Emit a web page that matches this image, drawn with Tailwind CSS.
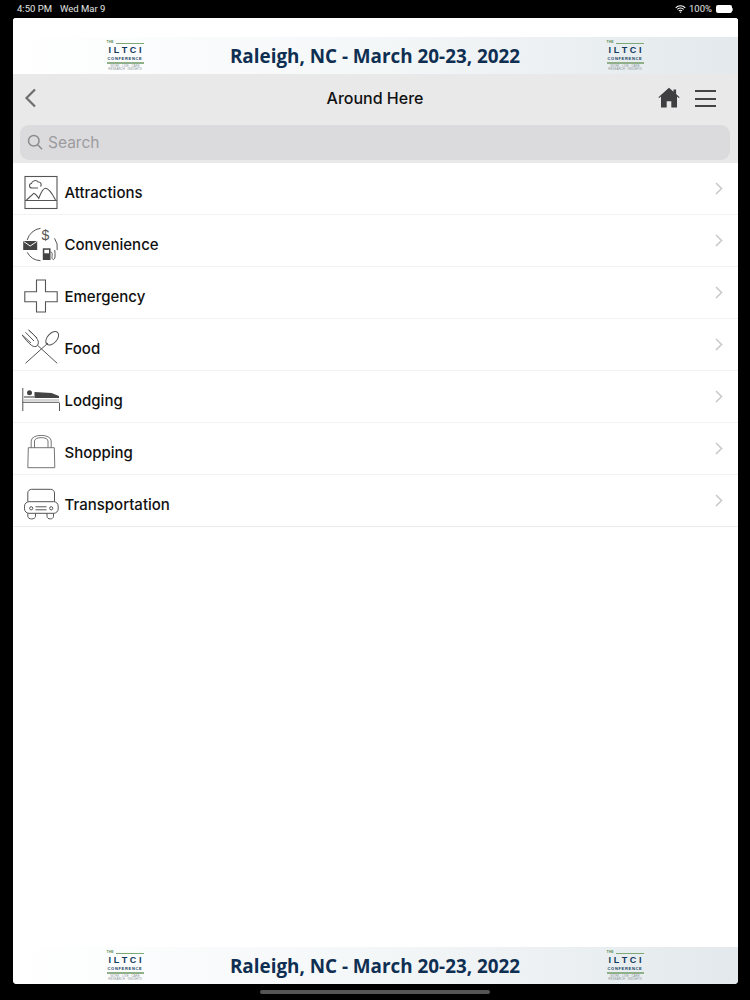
<!DOCTYPE html>
<html lang="en">
<head>
    <meta charset="UTF-8">
    <meta name="viewport" content="width=device-width, initial-scale=1.0">
    <title>Around Here</title>
    <script src="https://cdn.jsdelivr.net/npm/@tailwindcss/browser@4"></script>
</head>
<body class="bg-black w-[750px] h-[1000px] overflow-hidden font-['Inter','Liberation_Sans',sans-serif]">
    <!-- status bar -->
    <div class="h-[18px] flex items-center justify-between pl-[17px] pr-[17px] text-white/90 text-[9.5px] font-['Roboto',sans-serif]">
        <div class="flex gap-[8px]"><span>4:50 PM</span><span>Wed Mar 9</span></div>
        <div class="flex items-center gap-[3px]">
            <svg width="11" height="8" viewBox="0 0 11 8" fill="none" stroke="#fff" stroke-width="1.1"><path d="M.7 2.8a6.8 6.8 0 0 1 9.6 0M2.3 4.4a4.5 4.5 0 0 1 6.4 0M3.9 6a2.2 2.2 0 0 1 3.2 0"/><path d="M5.5 7.9 4.6 6.9a1.3 1.3 0 0 1 1.8 0z" fill="#fff" stroke="none"/></svg>
            <span>100%</span>
            <div class="flex items-center ml-[1px]">
                <div class="w-[16px] h-[8px] rounded-[2px] bg-white"></div>
                <div class="w-[1px] h-[3px] bg-white/60"></div>
            </div>
        </div>
    </div>

    <!-- app card -->
    <div class="ml-[12.5px] w-[725px] h-[966px] bg-white rounded-t-[3px] rounded-b-[4px] overflow-hidden flex flex-col">
        <div class="h-[19px] bg-white"></div>

        <!-- top banner -->
        <div class="h-[37px] flex items-center justify-center bg-gradient-to-r from-white via-[#f4f7f8] to-[#e3e9ec] relative">
            <div class="absolute left-[94px] top-[4px]">
                <div class="w-[37px] flex flex-col items-stretch font-['Liberation_Sans',sans-serif] leading-none">
                    <div class="flex items-center gap-[2px] text-[3.5px] font-bold text-[#5f8f5a] h-[4px]"><span>THE</span><div class="flex-1 h-px bg-[#7fa877]"></div></div>
                    <div class="flex justify-between text-[9px] font-bold text-[#123a5c] h-[11px] items-center px-[2px]"><span>I</span><span>L</span><span>T</span><span>C</span><span>I</span></div>
                    <div class="text-[4px] font-bold text-[#123a5c] h-[6px] flex items-center justify-center tracking-[0.7px] whitespace-nowrap">CONFERENCE</div>
                    <div class="h-[1.500px] bg-[#8fb089] mb-[1px]"></div>
                    <div class="text-[3px] text-[#8d989d] text-center whitespace-nowrap h-[3px]">WORK · LIVE · CARE</div>
                    <div class="text-[3px] text-[#8d989d] text-center whitespace-nowrap h-[3px]">RESEARCH · INSIGHTS</div>
                </div>
            </div>
            <span class="font-['Open_Sans',sans-serif] font-bold text-[18.85px] text-[#0f2f52] whitespace-nowrap relative top-[1px]">Raleigh, NC - March 20-23, 2022</span>
            <div class="absolute left-[594px] top-[4px]">
                <div class="w-[37px] flex flex-col items-stretch font-['Liberation_Sans',sans-serif] leading-none">
                    <div class="flex items-center gap-[2px] text-[3.5px] font-bold text-[#5f8f5a] h-[4px]"><span>THE</span><div class="flex-1 h-px bg-[#7fa877]"></div></div>
                    <div class="flex justify-between text-[9px] font-bold text-[#123a5c] h-[11px] items-center px-[2px]"><span>I</span><span>L</span><span>T</span><span>C</span><span>I</span></div>
                    <div class="text-[4px] font-bold text-[#123a5c] h-[6px] flex items-center justify-center tracking-[0.7px] whitespace-nowrap">CONFERENCE</div>
                    <div class="h-[1.500px] bg-[#8fb089] mb-[1px]"></div>
                    <div class="text-[3px] text-[#8d989d] text-center whitespace-nowrap h-[3px]">WORK · LIVE · CARE</div>
                    <div class="text-[3px] text-[#8d989d] text-center whitespace-nowrap h-[3px]">RESEARCH · INSIGHTS</div>
                </div>
            </div>
        </div>

        <!-- nav + search -->
        <div class="h-[89px] bg-[#e9e9ea] flex flex-col">
            <div class="h-[51px] relative flex items-center justify-center">
                <svg class="absolute left-[11px] top-[14px]" width="13" height="20" viewBox="0 0 13 20" fill="none" stroke="#6e6e70" stroke-width="2.2"><path d="M11 1.500 2.500 10l8.500 8.500"/></svg>
                <span class="text-[16px] font-medium text-[#111] relative top-[-2px]">Around Here</span>
                <svg class="absolute left-[645px] top-[13px]" width="22" height="21" viewBox="0 0 22 21"><path fill="#3f3f41" d="M11 .8 15.500 4.700V2.500h2.600v4.500L21.600 10.200l-.8.9-1.800-1.500v10.800h-5.700v-6.200H8.700v6.200H3V9.600l-1.800 1.500-.8-.9z"/></svg>
                <div class="absolute left-[682px] top-[16px] w-[21px] flex flex-col gap-[5.500px]">
                    <div class="h-[2px] bg-[#444446]"></div>
                    <div class="h-[2px] bg-[#444446]"></div>
                    <div class="h-[2px] bg-[#444446]"></div>
                </div>
            </div>
            <div class="ml-[7.500px] mr-[7.500px] h-[35px] rounded-[9px] bg-[#dbdadc] flex items-center pl-[7px] gap-[5px]">
                <svg class="relative top-[-1px]" width="16" height="16" viewBox="0 0 16 16" fill="none" stroke="#8b8b8f" stroke-width="1.500"><circle cx="6.800" cy="6.800" r="5.300"/><path d="m10.700 10.700 4.300 4.500"/></svg>
                <span class="text-[15.5px] text-[#9c9ca0]">Search</span>
            </div>
        </div>

        <!-- list -->
        <div class="flex flex-col">
            <div class="h-[52px] flex items-center border-b border-[#f2f2f2] relative">
                <svg class="absolute left-[10px] top-[10px]" width="37" height="37" viewBox="0 0 37 37" fill="none" stroke="#555" stroke-width="1.100"><rect x="2" y="3.500" width="32" height="32"/><path d="M2 27.500h32"/><path d="M3.500 27 10.800 20.300c2 .5 3.500 3 5 5 1.500-4 4-10 6.700-10 4 0 7.500 7 10 11.700"/><path d="M9 15c-3 0-3.500-4-.5-4.500.5-3 5-4 6.500-1.500 3-.5 4 3 2.500 4.500"/><path d="M9 15h6"/></svg>
                <span class="ml-[52px] text-[15px] font-medium text-[#111] relative top-[5px]">Attractions</span>
                <svg class="absolute right-[15px] top-[19px]" width="8" height="13" viewBox="0 0 8 13" fill="none" stroke="#cbcbce" stroke-width="1.700"><path d="m1 1 5.500 5.500L1 12"/></svg>
            </div>
            <div class="h-[52px] flex items-center border-b border-[#f2f2f2] relative">
                <svg class="absolute left-[10px] top-[8px]" width="37" height="40" viewBox="0 0 37 40" fill="none" stroke="#555" stroke-width="1"><path d="M4.200 17A16 16 0 0 1 17.500 5.300M4.200 29.300A16 16 0 0 0 17.500 37.700M31.500 15.300a16 16 0 0 1 2.700 11.700"/><rect x=".2" y="18" width="14" height="9" fill="#444" stroke="none"/><path d="m.6 18.500 6.600 4.500 6.600-4.500" stroke="#fff"/><rect x="19.800" y="25.300" width="7.700" height="11.700" fill="#444" stroke="none"/><rect x="21.300" y="26.800" width="4.700" height="3.500" fill="#fff" stroke="none"/><path d="M27.500 29c2.500 0 1.500 3 1.500 5.500s2.500 3 3-.5c.3-2 0-5-.3-7"/><text x="18.500" y="17" font-size="14" font-family="Liberation Sans, sans-serif" fill="#555" stroke="none">$</text></svg>
                <span class="ml-[52px] text-[15px] font-medium text-[#111] relative top-[5px]">Convenience</span>
                <svg class="absolute right-[15px] top-[19px]" width="8" height="13" viewBox="0 0 8 13" fill="none" stroke="#cbcbce" stroke-width="1.700"><path d="m1 1 5.500 5.500L1 12"/></svg>
            </div>
            <div class="h-[52px] flex items-center border-b border-[#f2f2f2] relative">
                <svg class="absolute left-[10px] top-[9px]" width="37" height="37" viewBox="0 0 37 37" fill="none" stroke="#555" stroke-width="1.100"><path d="M13.500 4h9v11.700h11.700v10H22.500V36h-9V25.700H1.800v-10h11.700z"/></svg>
                <span class="ml-[52px] text-[15px] font-medium text-[#111] relative top-[5px]">Emergency</span>
                <svg class="absolute right-[15px] top-[19px]" width="8" height="13" viewBox="0 0 8 13" fill="none" stroke="#cbcbce" stroke-width="1.700"><path d="m1 1 5.500 5.500L1 12"/></svg>
            </div>
            <div class="h-[52px] flex items-center border-b border-[#f2f2f2] relative">
                <svg class="absolute left-[8px] top-[9px]" width="40" height="38" viewBox="0 0 40 38" fill="none" stroke="#555" stroke-width="1"><path d="M36.200 35.300 16.200 17M1.200 7 10 15M4.500 4.300 13 13M7.800 2 16 10"/><path d="M1.200 7c2 3 6 8 9.500 10.500 2 1.500 4.500 1.500 5.500 0 1.500-1.500 1.500-4 .3-6-1.500-3-5.500-6.500-9-9.500"/><path d="M4.500 35.300 27 15"/><ellipse cx="31.200" cy="10.300" rx="4.800" ry="8" transform="rotate(42 31.200 10.300)"/></svg>
                <span class="ml-[52px] text-[15px] font-medium text-[#111] relative top-[5px]">Food</span>
                <svg class="absolute right-[15px] top-[19px]" width="8" height="13" viewBox="0 0 8 13" fill="none" stroke="#cbcbce" stroke-width="1.700"><path d="m1 1 5.500 5.500L1 12"/></svg>
            </div>
            <div class="h-[52px] flex items-center border-b border-[#f2f2f2] relative">
                <svg class="absolute left-[9px] top-[14px]" width="39" height="28" viewBox="0 0 39 28" fill="none" stroke="#555" stroke-width="1"><path d="M.8 3v23M37.500 18v8M.8 17.300h36.700"/><circle cx="7.500" cy="7.700" r="2.500" fill="#444" stroke="none"/><path d="M12.500 7l17 1 7.500 3v2H12.500z" fill="#444" stroke="none"/><path d="M2 12h10.500" stroke="#777" stroke-width="1.500"/><path d="M2 15h35" stroke="#aaa"/></svg>
                <span class="ml-[52px] text-[15px] font-medium text-[#111] relative top-[5px]">Lodging</span>
                <svg class="absolute right-[15px] top-[19px]" width="8" height="13" viewBox="0 0 8 13" fill="none" stroke="#cbcbce" stroke-width="1.700"><path d="m1 1 5.500 5.500L1 12"/></svg>
            </div>
            <div class="h-[52px] flex items-center border-b border-[#f2f2f2] relative">
                <svg class="absolute left-[13px] top-[10px]" width="30" height="36" viewBox="0 0 30 36" fill="none" stroke="#666" stroke-width=".9"><path d="M2.300 14.700h26l.5 20H1.800z"/><path d="M5.200 14.700V8c0-7.500 20-7.500 20 0v6.700M8.500 14.700V8c0-4.500 13.500-4.500 13.500 0v6.700"/></svg>
                <span class="ml-[52px] text-[15px] font-medium text-[#111] relative top-[5px]">Shopping</span>
                <svg class="absolute right-[15px] top-[19px]" width="8" height="13" viewBox="0 0 8 13" fill="none" stroke="#cbcbce" stroke-width="1.700"><path d="m1 1 5.500 5.500L1 12"/></svg>
            </div>
            <div class="h-[52px] flex items-center border-b border-[#ececec] relative">
                <svg class="absolute left-[10px] top-[13px]" width="36" height="32" viewBox="0 0 36 32" fill="none" stroke="#555" stroke-width="1"><path d="M4.800 13.700V5c0-2 1.700-3.700 3.700-3.700h19.300c2 0 3.700 1.700 3.700 3.700v8.700"/><rect x="1.500" y="13.700" width="33.700" height="11.600" rx="4.500"/><path d="M12.500 18.800h11M12.500 21.800h11"/><circle cx="8.200" cy="20.300" r="1.600"/><circle cx="28.200" cy="20.300" r="1.600"/><path d="M4.800 25.300v3c0 3.500 7.700 3.500 7.700 0v-3M24 25.300v3c0 3.500 6.500 3.500 6.500 0v-3"/></svg>
                <span class="ml-[52px] text-[15px] font-medium text-[#111] relative top-[5px]">Transportation</span>
                <svg class="absolute right-[15px] top-[19px]" width="8" height="13" viewBox="0 0 8 13" fill="none" stroke="#cbcbce" stroke-width="1.700"><path d="m1 1 5.500 5.500L1 12"/></svg>
            </div>
        </div>

        <div class="flex-1"></div>

        <!-- bottom banner -->
        <div class="h-[37px] flex items-center justify-center bg-gradient-to-r from-white via-[#f4f7f8] to-[#e3e9ec] relative">
            <div class="absolute left-[94px] top-[4px]">
                <div class="w-[37px] flex flex-col items-stretch font-['Liberation_Sans',sans-serif] leading-none">
                    <div class="flex items-center gap-[2px] text-[3.5px] font-bold text-[#5f8f5a] h-[4px]"><span>THE</span><div class="flex-1 h-px bg-[#7fa877]"></div></div>
                    <div class="flex justify-between text-[9px] font-bold text-[#123a5c] h-[11px] items-center px-[2px]"><span>I</span><span>L</span><span>T</span><span>C</span><span>I</span></div>
                    <div class="text-[4px] font-bold text-[#123a5c] h-[6px] flex items-center justify-center tracking-[0.7px] whitespace-nowrap">CONFERENCE</div>
                    <div class="h-[1.500px] bg-[#8fb089] mb-[1px]"></div>
                    <div class="text-[3px] text-[#8d989d] text-center whitespace-nowrap h-[3px]">WORK · LIVE · CARE</div>
                    <div class="text-[3px] text-[#8d989d] text-center whitespace-nowrap h-[3px]">RESEARCH · INSIGHTS</div>
                </div>
            </div>
            <span class="font-['Open_Sans',sans-serif] font-bold text-[18.85px] text-[#0f2f52] whitespace-nowrap relative top-[1px]">Raleigh, NC - March 20-23, 2022</span>
            <div class="absolute left-[594px] top-[4px]">
                <div class="w-[37px] flex flex-col items-stretch font-['Liberation_Sans',sans-serif] leading-none">
                    <div class="flex items-center gap-[2px] text-[3.5px] font-bold text-[#5f8f5a] h-[4px]"><span>THE</span><div class="flex-1 h-px bg-[#7fa877]"></div></div>
                    <div class="flex justify-between text-[9px] font-bold text-[#123a5c] h-[11px] items-center px-[2px]"><span>I</span><span>L</span><span>T</span><span>C</span><span>I</span></div>
                    <div class="text-[4px] font-bold text-[#123a5c] h-[6px] flex items-center justify-center tracking-[0.7px] whitespace-nowrap">CONFERENCE</div>
                    <div class="h-[1.500px] bg-[#8fb089] mb-[1px]"></div>
                    <div class="text-[3px] text-[#8d989d] text-center whitespace-nowrap h-[3px]">WORK · LIVE · CARE</div>
                    <div class="text-[3px] text-[#8d989d] text-center whitespace-nowrap h-[3px]">RESEARCH · INSIGHTS</div>
                </div>
            </div>
        </div>
    </div>

    <!-- home indicator -->
    <div class="mt-[6px] mx-auto w-[230px] h-[4px] rounded-full bg-[#555]"></div>
</body>
</html>
